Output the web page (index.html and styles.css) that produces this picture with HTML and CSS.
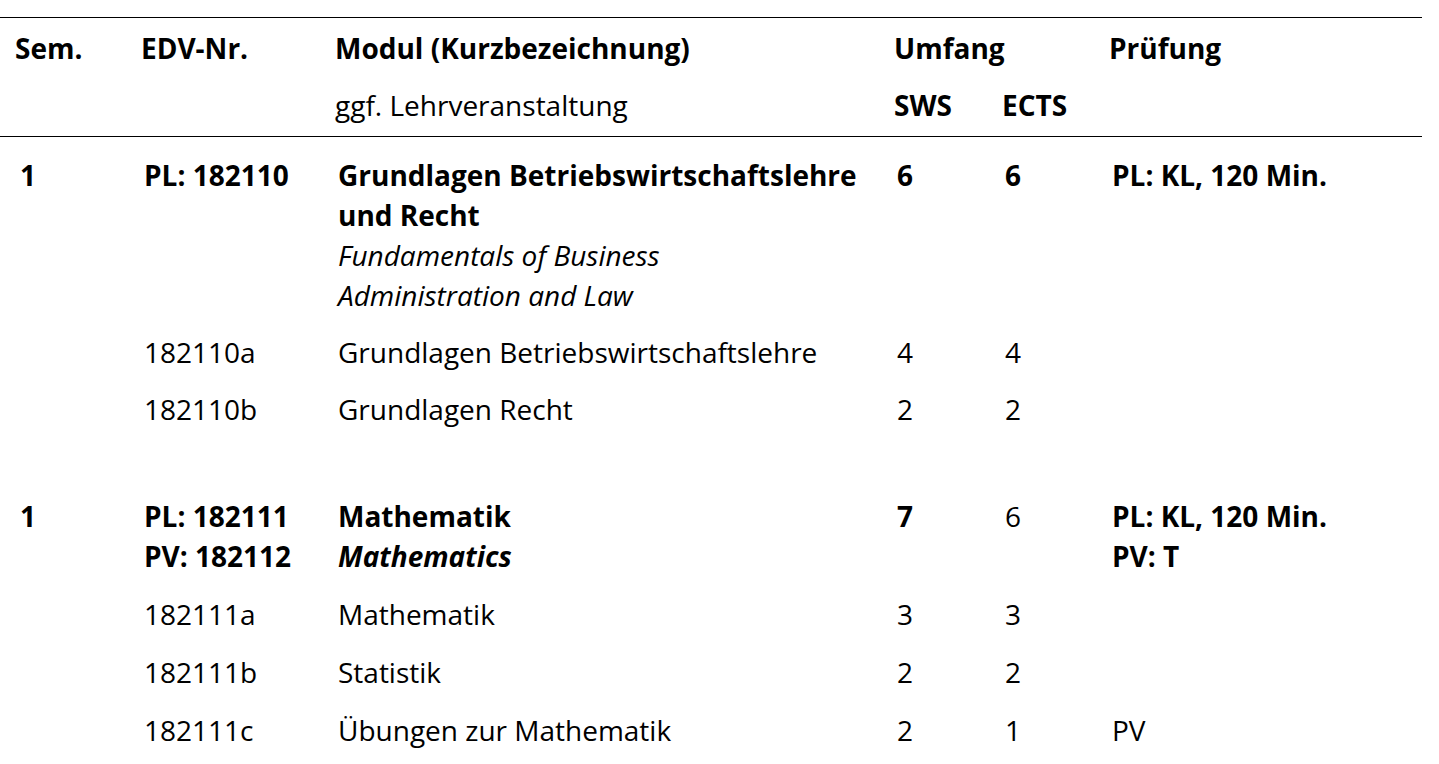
FILE: index.html
```html
<!DOCTYPE html>
<html lang="de">
<head>
<meta charset="utf-8">
<title>Modulübersicht</title>
<link rel="stylesheet" href="styles.css">
</head>
<body>
<table class="mods">
  <colgroup>
    <col class="c1"><col class="c2"><col class="c3"><col class="c4"><col class="c5"><col class="c6">
  </colgroup>
  <thead>
    <tr class="h1">
      <th class="sem">Sem.</th><th>EDV-Nr.</th><th>Modul (Kurzbezeichnung)</th><th colspan="2">Umfang</th><th>Prüfung</th>
    </tr>
    <tr class="h2">
      <th class="sem"></th><th></th><th class="norm">ggf. Lehrveranstaltung</th><th>SWS</th><th>ECTS</th><th></th>
    </tr>
  </thead>
  <tbody>
    <tr class="mod first">
      <td>1</td><td>PL: 182110</td>
      <td>Grundlagen Betriebswirtschaftslehre und Recht<span class="en">Fundamentals of Business<br>Administration and Law</span></td>
      <td>6</td><td>6</td><td>PL: KL, 120 Min.</td>
    </tr>
    <tr class="sub">
      <td></td><td>182110a</td><td>Grundlagen Betriebswirtschaftslehre</td><td>4</td><td>4</td><td></td>
    </tr>
    <tr class="sub">
      <td></td><td>182110b</td><td>Grundlagen Recht</td><td>2</td><td>2</td><td></td>
    </tr>
    <tr class="mod gap">
      <td>1</td><td>PL: 182111<br>PV: 182112</td>
      <td>Mathematik<span class="en bold">Mathematics</span></td>
      <td>7</td><td class="norm">6</td><td>PL: KL, 120 Min.<br>PV: T</td>
    </tr>
    <tr class="sub wide">
      <td></td><td>182111a</td><td>Mathematik</td><td>3</td><td>3</td><td></td>
    </tr>
    <tr class="sub wide">
      <td></td><td>182111b</td><td>Statistik</td><td>2</td><td>2</td><td></td>
    </tr>
    <tr class="sub wide">
      <td></td><td>182111c</td><td>Übungen zur Mathematik</td><td>2</td><td>1</td><td>PV</td>
    </tr>
  </tbody>
</table>
</body>
</html>
```

FILE: styles.css
```css
html, body {
  margin: 0;
  padding: 0;
  background: #fff;
}
body {
  font-family: "Open Sans", "Noto Sans", sans-serif;
  font-size: 28px;
  color: #000;
}
.mods {
  margin-top: 17px;
  width: 1422px;
  border-collapse: collapse;
  table-layout: fixed;
  border-top: 1px solid #000;
}
.c1 { width: 124px; }
.c2 { width: 194px; }
.c3 { width: 559px; }
.c4 { width: 108px; }
.c5 { width: 107px; }
.c6 { width: 330px; }

th, td {
  text-align: left;
  vertical-align: top;
  padding: 0 0 0 20px;
  line-height: 40px;
  white-space: nowrap;
}
th {
  font-weight: 700;
  padding-left: 17px;
}
th.sem { padding-left: 15px; }
th.norm { font-weight: 400; }
.h1 th { padding-top: 10px; }
.h2 th { padding-top: 17px; padding-bottom: 11px; border-bottom: 1px solid #000; }

.mod td { font-weight: 700; }
.mod td:nth-child(3) { white-space: normal; padding-right: 6px; }
.mod td.norm { font-weight: 400; }
.en {
  display: block;
  font-style: italic;
  font-weight: 400;
}
.en.bold { font-weight: 700; }
.first td { padding-top: 18px; }
.sub td { padding-top: 17px; }
.sub.wide td { padding-top: 18px; }
.gap td { padding-top: 67px; }
```
